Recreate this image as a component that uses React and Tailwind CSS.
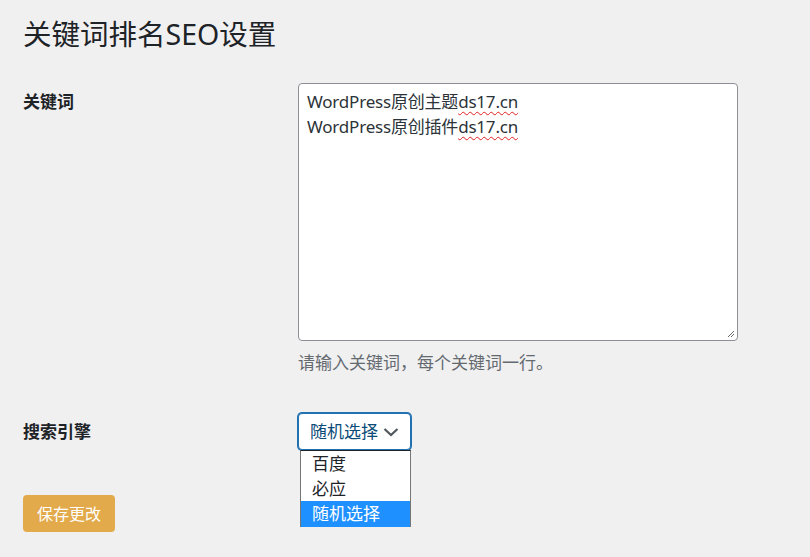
import React from "react";

const font = { fontFamily: '"Noto Sans", "Noto Sans CJK SC", sans-serif' };

function ResizeGrip() {
  return (
    <svg width="10" height="10" viewBox="0 0 10 10" className="absolute bottom-[2px] right-[2px]">
      <path d="M9 3 L3 9 M9 6 L6 9" stroke="#6b6b6b" strokeWidth="1" />
    </svg>
  );
}

function Chevron() {
  return (
    <svg width="16" height="14" viewBox="0 0 16 14" className="ml-[5px]">
      <path d="M1.5 4 L8 10 L14.5 4" fill="none" stroke="#50575e" strokeWidth="2.2" />
    </svg>
  );
}

export default function App() {
  return (
    <div className="w-[810px] h-[557px] bg-[#f0f0f1] text-[#1d2327] pl-[23px] overflow-hidden" style={font}>
      <h1 className="text-[28.5px] leading-[36px] pt-[16px] font-normal">关键词排名SEO设置</h1>

      <div className="flex mt-[31px]">
        <div className="w-[275px] pt-[6px] text-[17px] font-bold leading-[25px]">关键词</div>
        <div>
          <div className="relative w-[440px] h-[258px] bg-white border border-[#8c8f94] rounded-[4px] px-[8px] pt-[5px] text-[17px] leading-[25px] text-[#2c3338] tracking-[-0.2px]">
            <div>
              WordPress原创主题
              <span className="underline decoration-wavy decoration-[#e02020] decoration-1 underline-offset-[3px]">ds17.cn</span>
            </div>
            <div>
              WordPress原创插件
              <span className="underline decoration-wavy decoration-[#e02020] decoration-1 underline-offset-[3px]">ds17.cn</span>
            </div>
            <ResizeGrip />
          </div>
          <p className="mt-[9px] text-[17px] leading-[25px] text-[#646970]">请输入关键词，每个关键词一行。</p>
        </div>
      </div>

      <div className="flex mt-[38px]">
        <div className="w-[275px] pt-[6px] text-[17px] font-bold leading-[25px]">搜索引擎</div>
        <div className="relative">
          <div className="flex items-center w-[113px] h-[37px] bg-white border border-[#2271b1] shadow-[0_0_0_1px_#2271b1] rounded-[4px] pl-[11px] text-[17px] text-[#0a4b78]">
            随机选择
            <Chevron />
          </div>
          <div className="absolute left-[2px] top-[37px] w-[111px] bg-white border-x border-[#767676] border-t border-t-[#1d2327] text-[17px] leading-[25px] text-[#1d2327]">
            <div className="pl-[11px]">百度</div>
            <div className="pl-[11px]">必应</div>
            <div className="pl-[11px] h-[26px] bg-[#1e90ff] text-white">随机选择</div>
          </div>
        </div>
      </div>

      <button className="mt-[45px] w-[92px] h-[37px] rounded-[4px] bg-[#e2aa4a] text-white text-[16px]">保存更改</button>
    </div>
  );
}
